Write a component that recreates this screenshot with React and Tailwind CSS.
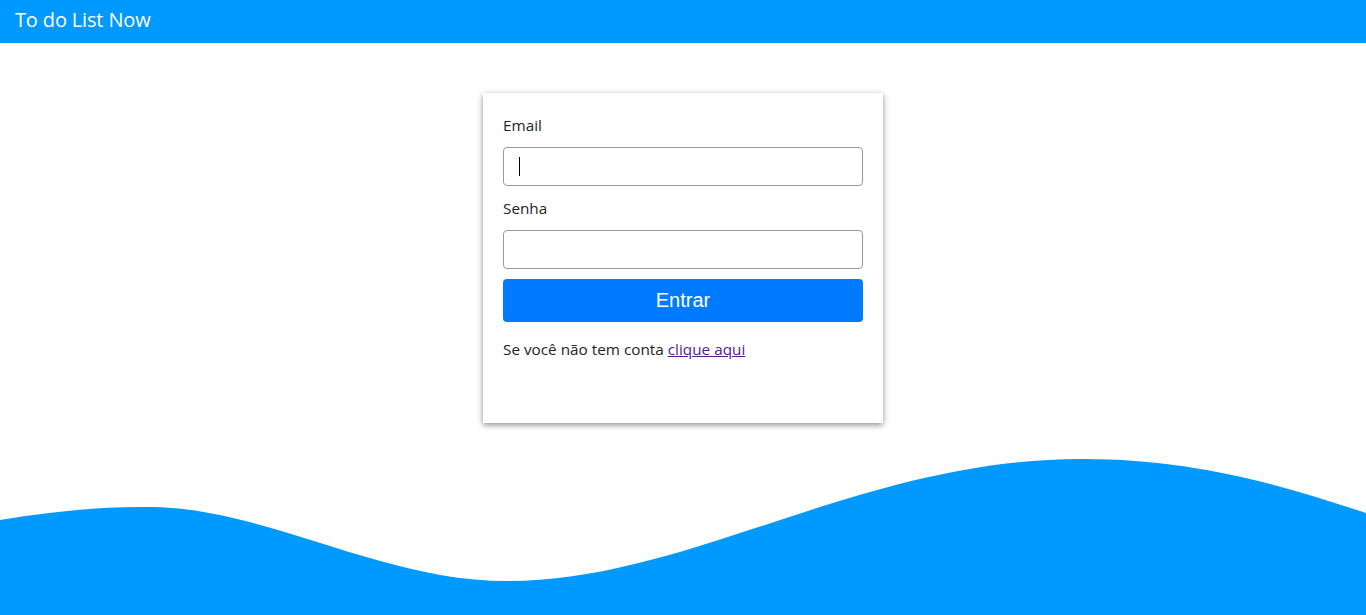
import React from 'react';

const Wave = () => (
  <svg viewBox="0 0 1366 175" preserveAspectRatio="none" className="block w-full h-[175px]">
    <path
      fill="#0099ff"
      d="M0,80 C50,72 100,66 152,67 C270,69 380,141 508,141 C690,141 860,19 1082,19 C1200,19 1290,48 1366,73 L1366,175 L0,175 Z"
    />
  </svg>
);

const App = () => {
  return (
    <div className="min-h-screen flex flex-col bg-white font-['Open_Sans',sans-serif] text-[#212529]">
      <header className="h-[43px] bg-[#0099ff] flex items-center px-[15px] pb-[3px]">
        <span className="text-white text-[20px] tracking-[-0.15px]">To do List Now</span>
      </header>

      <main className="flex justify-center mt-[50px]">
        <div className="w-[400px] h-[330px] bg-white p-5 shadow-[0_2px_6px_rgba(0,0,0,0.45)]">
          <form className="flex flex-col text-[15.3px]">
            <label className="leading-6 mb-[10px]">Email</label>
            <div className="relative">
              <input
                type="email"
                className="w-full h-[39px] border border-[#999] rounded px-3 outline-none"
              />
              <span className="absolute left-[16px] top-[10px] w-px h-[19px] bg-black" />
            </div>

            <label className="leading-6 mt-[10px] mb-[10px]">Senha</label>
            <input
              type="password"
              className="w-full h-[39px] border border-[#999] rounded px-3 outline-none"
            />

            <button
              type="button"
              className="mt-[10px] h-[43px] w-full rounded bg-[#007bff] text-white text-[20px] pb-[2px] font-['Liberation_Sans',Arial,sans-serif]"
            >
              Entrar
            </button>

            <p className="mt-4 leading-6 -translate-y-px">
              Se você não tem conta{' '}
              <a href="#" className="underline text-[#551a8b]">clique aqui</a>
            </p>
          </form>
        </div>
      </main>

      <div className="mt-auto">
        <Wave />
      </div>
    </div>
  );
};

export default App;
